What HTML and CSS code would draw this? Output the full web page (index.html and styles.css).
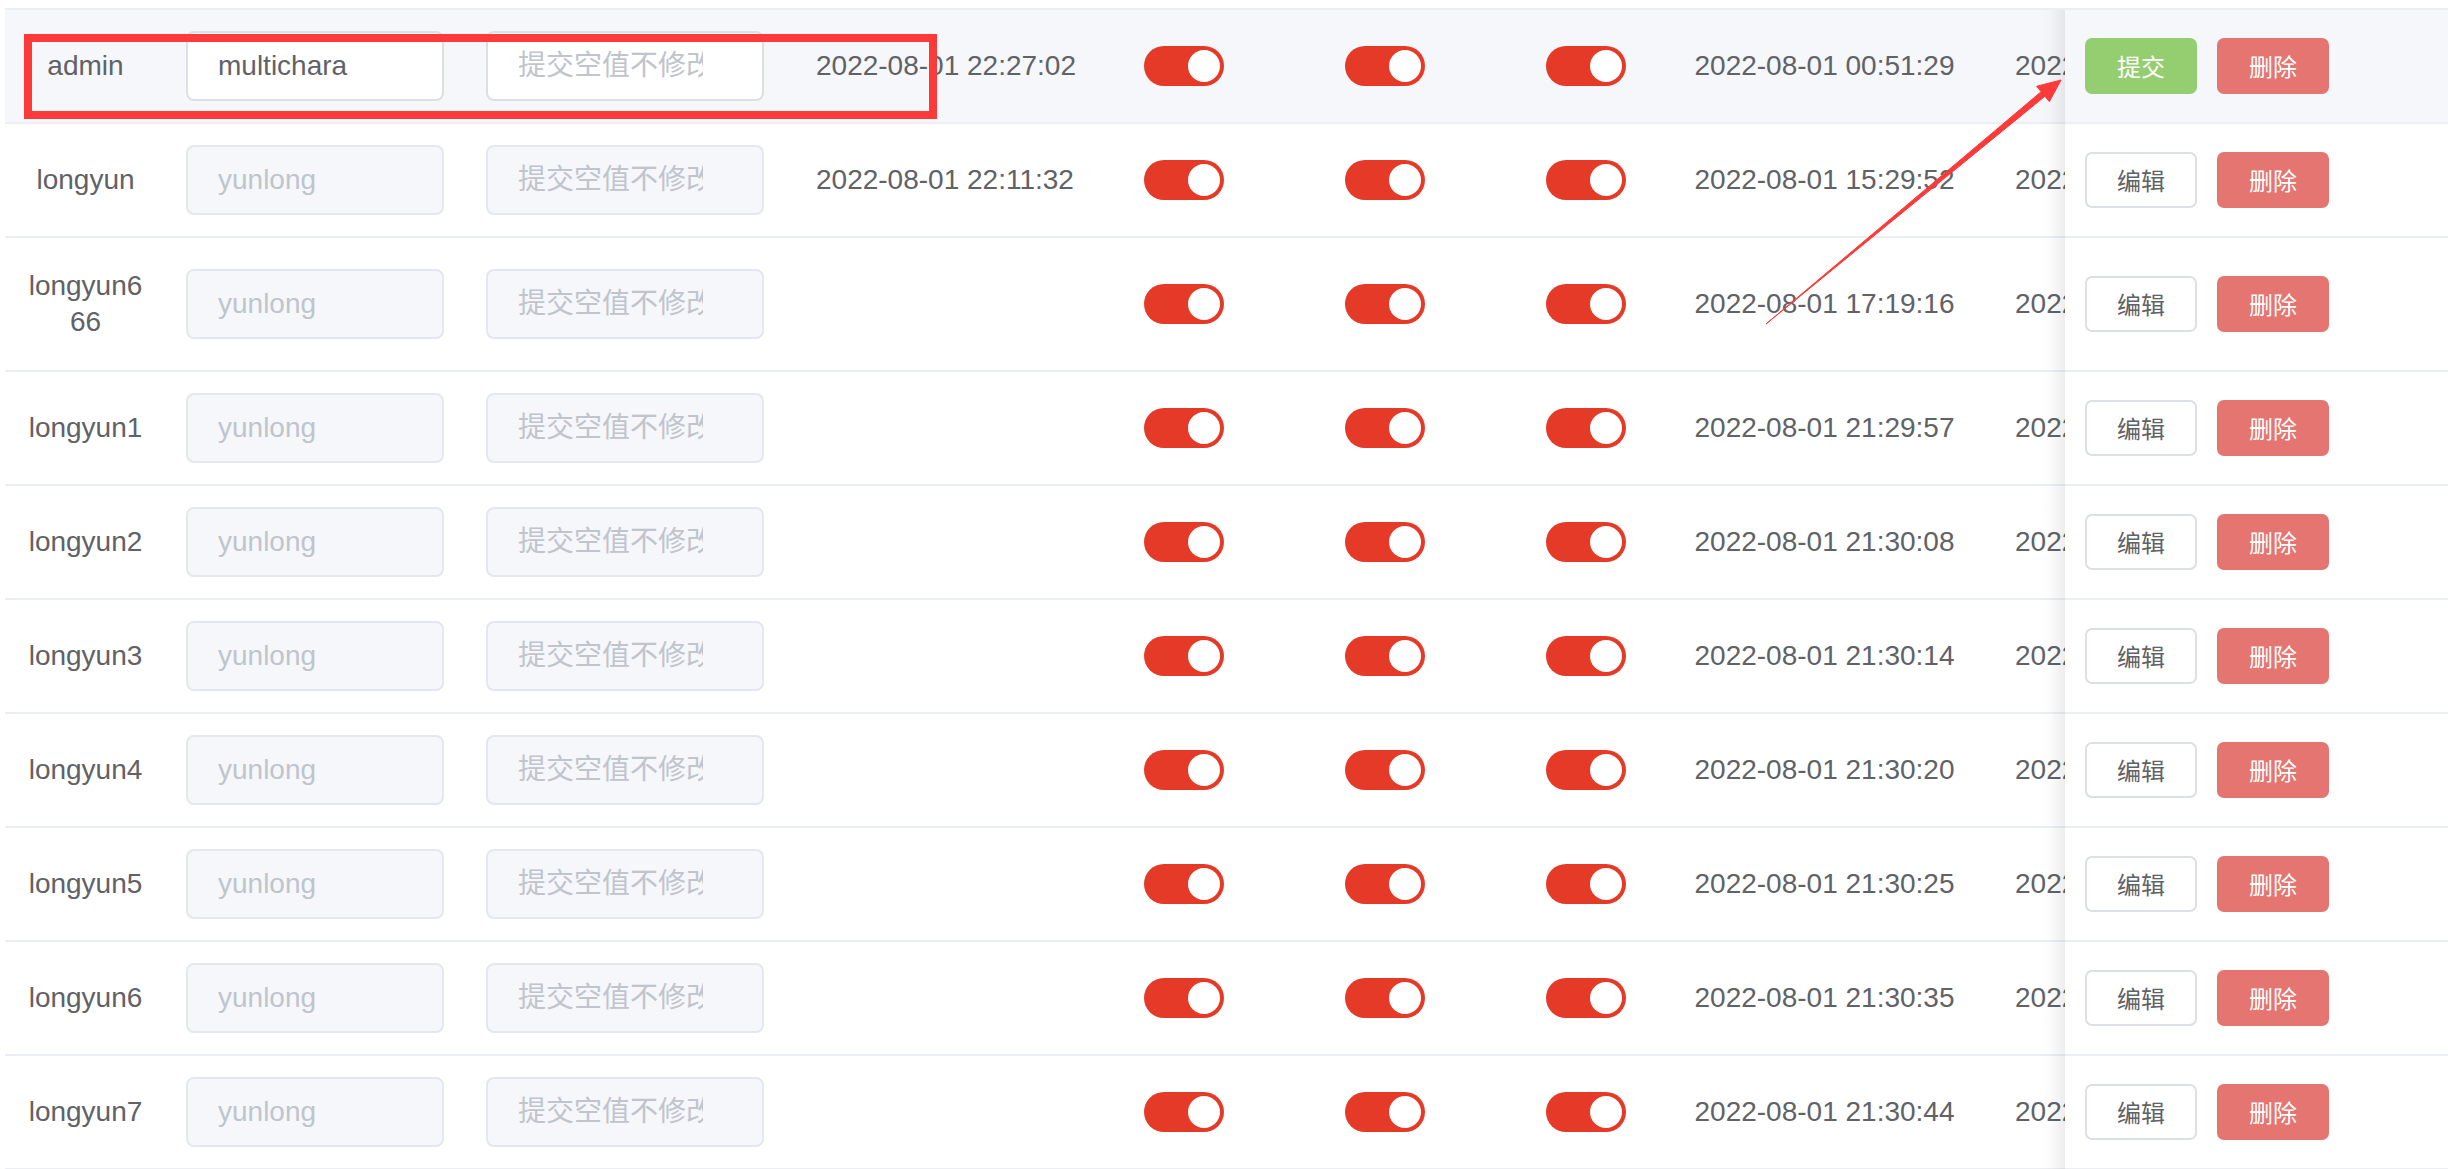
FILE: index.html
```html
<!DOCTYPE html>
<html lang="zh-CN">
<head>
<meta charset="utf-8">
<title>用户列表</title>
<link rel="stylesheet" href="styles.css">
</head>
<body>
<div class="table">
  <div class="row current">
    <div class="c-name">admin</div>
    <div class="c-in1"><input class="ipt ipt-w1 active" value="multichara"></div>
    <div class="c-in2"><input class="ipt ipt-w2 active" placeholder="提交空值不修改"></div>
    <div class="c-date1">2022-08-01 22:27:02</div>
    <div class="c-sw"><span class="switch"><span class="knob"></span></span></div>
    <div class="c-sw"><span class="switch"><span class="knob"></span></span></div>
    <div class="c-sw"><span class="switch"><span class="knob"></span></span></div>
    <div class="c-date2">2022-08-01 00:51:29</div>
    <div class="c-date3">2022</div>
    <div class="c-act"><button class="btn btn-ok">提交</button><button class="btn btn-del">删除</button></div>
  </div>
  <div class="row">
    <div class="c-name">longyun</div>
    <div class="c-in1"><input class="ipt ipt-w1" placeholder="yunlong"></div>
    <div class="c-in2"><input class="ipt ipt-w2" placeholder="提交空值不修改"></div>
    <div class="c-date1">2022-08-01 22:11:32</div>
    <div class="c-sw"><span class="switch"><span class="knob"></span></span></div>
    <div class="c-sw"><span class="switch"><span class="knob"></span></span></div>
    <div class="c-sw"><span class="switch"><span class="knob"></span></span></div>
    <div class="c-date2">2022-08-01 15:29:52</div>
    <div class="c-date3">2022</div>
    <div class="c-act"><button class="btn btn-edit">编辑</button><button class="btn btn-del">删除</button></div>
  </div>
  <div class="row tall">
    <div class="c-name">longyun666</div>
    <div class="c-in1"><input class="ipt ipt-w1" placeholder="yunlong"></div>
    <div class="c-in2"><input class="ipt ipt-w2" placeholder="提交空值不修改"></div>
    <div class="c-date1"></div>
    <div class="c-sw"><span class="switch"><span class="knob"></span></span></div>
    <div class="c-sw"><span class="switch"><span class="knob"></span></span></div>
    <div class="c-sw"><span class="switch"><span class="knob"></span></span></div>
    <div class="c-date2">2022-08-01 17:19:16</div>
    <div class="c-date3">2022</div>
    <div class="c-act"><button class="btn btn-edit">编辑</button><button class="btn btn-del">删除</button></div>
  </div>
  <div class="row">
    <div class="c-name">longyun1</div>
    <div class="c-in1"><input class="ipt ipt-w1" placeholder="yunlong"></div>
    <div class="c-in2"><input class="ipt ipt-w2" placeholder="提交空值不修改"></div>
    <div class="c-date1"></div>
    <div class="c-sw"><span class="switch"><span class="knob"></span></span></div>
    <div class="c-sw"><span class="switch"><span class="knob"></span></span></div>
    <div class="c-sw"><span class="switch"><span class="knob"></span></span></div>
    <div class="c-date2">2022-08-01 21:29:57</div>
    <div class="c-date3">2022</div>
    <div class="c-act"><button class="btn btn-edit">编辑</button><button class="btn btn-del">删除</button></div>
  </div>
  <div class="row">
    <div class="c-name">longyun2</div>
    <div class="c-in1"><input class="ipt ipt-w1" placeholder="yunlong"></div>
    <div class="c-in2"><input class="ipt ipt-w2" placeholder="提交空值不修改"></div>
    <div class="c-date1"></div>
    <div class="c-sw"><span class="switch"><span class="knob"></span></span></div>
    <div class="c-sw"><span class="switch"><span class="knob"></span></span></div>
    <div class="c-sw"><span class="switch"><span class="knob"></span></span></div>
    <div class="c-date2">2022-08-01 21:30:08</div>
    <div class="c-date3">2022</div>
    <div class="c-act"><button class="btn btn-edit">编辑</button><button class="btn btn-del">删除</button></div>
  </div>
  <div class="row">
    <div class="c-name">longyun3</div>
    <div class="c-in1"><input class="ipt ipt-w1" placeholder="yunlong"></div>
    <div class="c-in2"><input class="ipt ipt-w2" placeholder="提交空值不修改"></div>
    <div class="c-date1"></div>
    <div class="c-sw"><span class="switch"><span class="knob"></span></span></div>
    <div class="c-sw"><span class="switch"><span class="knob"></span></span></div>
    <div class="c-sw"><span class="switch"><span class="knob"></span></span></div>
    <div class="c-date2">2022-08-01 21:30:14</div>
    <div class="c-date3">2022</div>
    <div class="c-act"><button class="btn btn-edit">编辑</button><button class="btn btn-del">删除</button></div>
  </div>
  <div class="row">
    <div class="c-name">longyun4</div>
    <div class="c-in1"><input class="ipt ipt-w1" placeholder="yunlong"></div>
    <div class="c-in2"><input class="ipt ipt-w2" placeholder="提交空值不修改"></div>
    <div class="c-date1"></div>
    <div class="c-sw"><span class="switch"><span class="knob"></span></span></div>
    <div class="c-sw"><span class="switch"><span class="knob"></span></span></div>
    <div class="c-sw"><span class="switch"><span class="knob"></span></span></div>
    <div class="c-date2">2022-08-01 21:30:20</div>
    <div class="c-date3">2022</div>
    <div class="c-act"><button class="btn btn-edit">编辑</button><button class="btn btn-del">删除</button></div>
  </div>
  <div class="row">
    <div class="c-name">longyun5</div>
    <div class="c-in1"><input class="ipt ipt-w1" placeholder="yunlong"></div>
    <div class="c-in2"><input class="ipt ipt-w2" placeholder="提交空值不修改"></div>
    <div class="c-date1"></div>
    <div class="c-sw"><span class="switch"><span class="knob"></span></span></div>
    <div class="c-sw"><span class="switch"><span class="knob"></span></span></div>
    <div class="c-sw"><span class="switch"><span class="knob"></span></span></div>
    <div class="c-date2">2022-08-01 21:30:25</div>
    <div class="c-date3">2022</div>
    <div class="c-act"><button class="btn btn-edit">编辑</button><button class="btn btn-del">删除</button></div>
  </div>
  <div class="row">
    <div class="c-name">longyun6</div>
    <div class="c-in1"><input class="ipt ipt-w1" placeholder="yunlong"></div>
    <div class="c-in2"><input class="ipt ipt-w2" placeholder="提交空值不修改"></div>
    <div class="c-date1"></div>
    <div class="c-sw"><span class="switch"><span class="knob"></span></span></div>
    <div class="c-sw"><span class="switch"><span class="knob"></span></span></div>
    <div class="c-sw"><span class="switch"><span class="knob"></span></span></div>
    <div class="c-date2">2022-08-01 21:30:35</div>
    <div class="c-date3">2022</div>
    <div class="c-act"><button class="btn btn-edit">编辑</button><button class="btn btn-del">删除</button></div>
  </div>
  <div class="row">
    <div class="c-name">longyun7</div>
    <div class="c-in1"><input class="ipt ipt-w1" placeholder="yunlong"></div>
    <div class="c-in2"><input class="ipt ipt-w2" placeholder="提交空值不修改"></div>
    <div class="c-date1"></div>
    <div class="c-sw"><span class="switch"><span class="knob"></span></span></div>
    <div class="c-sw"><span class="switch"><span class="knob"></span></span></div>
    <div class="c-sw"><span class="switch"><span class="knob"></span></span></div>
    <div class="c-date2">2022-08-01 21:30:44</div>
    <div class="c-date3">2022</div>
    <div class="c-act"><button class="btn btn-edit">编辑</button><button class="btn btn-del">删除</button></div>
  </div>
</div>

<div class="mark-rect"></div>
<svg class="mark-arrow" width="2448" height="1169" viewBox="0 0 2448 1169">
  <polygon points="1766,324 2044.9,96.3 2049.4,101.7 2061,80 2036.6,86.3 2041.1,91.7" fill="#fc3a3a" stroke="#fc3a3a" stroke-width="1" stroke-linejoin="round"/>
</svg>
</body>
</html>
```

FILE: styles.css
```css
html, body {
  margin: 0;
  padding: 0;
  background: #ffffff;
}

body {
  position: relative;
  width: 2448px;
  height: 1169px;
  overflow: hidden;
  font-family: "Liberation Sans", Arial, "Noto Sans CJK SC", sans-serif;
  font-size: 28px;
  color: #606266;
}

.table {
  position: relative;
  margin: 8px 0 0 5px;
  border-top: 2px solid #ebeef5;
}

.table::after {
  content: "";
  position: absolute;
  top: 0;
  bottom: 0;
  right: 383px;
  width: 26px;
  background: linear-gradient(to right, rgba(0, 0, 0, 0) 0%, rgba(0, 0, 0, 0.015) 45%, rgba(0, 0, 0, 0.07) 100%);
  pointer-events: none;
}

.row {
  display: grid;
  grid-template-columns: 161px 300px 318px 299px 201px 201px 201px 277px 102px 383px;
  align-items: center;
  height: 112px;
  border-bottom: 2px solid #ebeef5;
  background: #ffffff;
}

.row.current {
  background: #f5f7fa;
}

.row.tall {
  height: 132px;
}

.c-name {
  padding: 0 20px;
  text-align: center;
  line-height: 36px;
  word-break: break-all;
}

.c-in1,
.c-in2 {
  padding-left: 20px;
  display: flex;
}

.ipt {
  box-sizing: border-box;
  height: 70px;
  border: 2px solid #e4e7ed;
  border-radius: 8px;
  background: #f5f7fa;
  padding: 0 30px;
  font-family: "Liberation Sans", Arial, "Noto Sans CJK SC", sans-serif;
  font-size: 28px;
  color: #606266;
  outline: none;
  margin: 0;
}

.ipt::placeholder {
  color: #c0c4cc;
  opacity: 1;
}

.ipt.active {
  background: #ffffff;
  border-color: #dcdfe6;
}

.ipt-w1 {
  width: 258px;
}

.ipt-w2 {
  width: 278px;
  padding-right: 59px;
}

.c-date1 {
  padding-left: 32px;
  white-space: nowrap;
}

.c-date2 {
  text-align: center;
  white-space: nowrap;
}

.c-date3 {
  padding-left: 52px;
  white-space: nowrap;
  overflow: hidden;
}

.c-sw {
  display: flex;
  justify-content: center;
}

.switch {
  position: relative;
  display: block;
  width: 80px;
  height: 40px;
  border-radius: 20px;
  background: #e53a27;
}

.knob {
  position: absolute;
  top: 4px;
  right: 4px;
  width: 32px;
  height: 32px;
  border-radius: 50%;
  background: #ffffff;
}

.c-act {
  display: flex;
  gap: 20px;
  padding-left: 20px;
}

.btn {
  box-sizing: border-box;
  width: 112px;
  height: 56px;
  border-radius: 7px;
  border: 2px solid transparent;
  font-family: "Noto Sans CJK SC", "Liberation Sans", sans-serif;
  font-size: 24px;
  line-height: 1;
  padding: 0;
  margin: 0;
  color: #ffffff;
  cursor: pointer;
}

.btn-ok {
  background: #95ce70;
  border-color: #95ce70;
}

.btn-del {
  background: #e47571;
  border-color: #e47571;
}

.btn-edit {
  background: #ffffff;
  border-color: #dcdfe6;
  color: #606266;
}

.mark-rect {
  position: absolute;
  left: 24px;
  top: 34px;
  width: 913px;
  height: 85px;
  box-sizing: border-box;
  border: 8px solid #fc3a3a;
  pointer-events: none;
}

.mark-arrow {
  position: absolute;
  left: 0;
  top: 0;
  pointer-events: none;
}
```
